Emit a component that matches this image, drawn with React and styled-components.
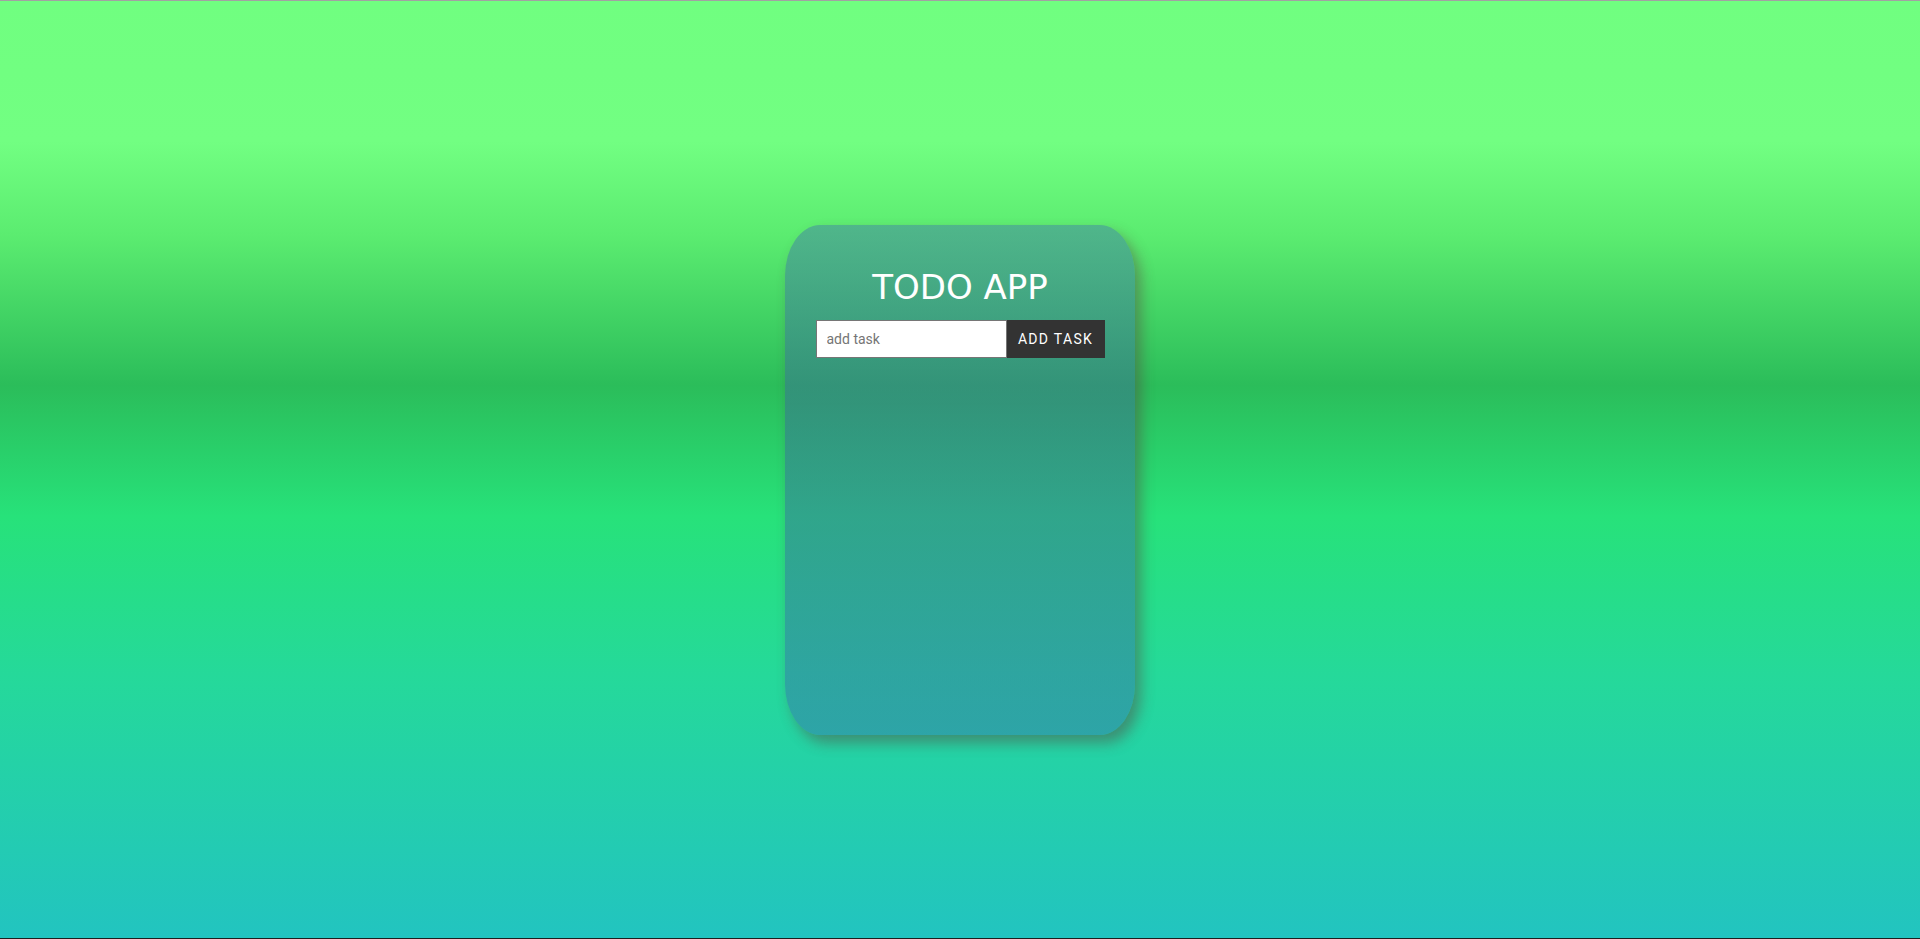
import React from "react";
import styled, { createGlobalStyle } from "styled-components";

const GlobalStyle = createGlobalStyle`
  html, body {
    margin: 0;
    padding: 0;
  }
  * {
    box-sizing: border-box;
  }
`;

const Page = styled.main`
  height: 100vh;
  border-top: 1px solid #a2a2a2;
  border-bottom: 1px solid #1e1e1e;
  background: linear-gradient(
    to bottom,
    #70ff80 0%,
    #72ff82 15%,
    #5bec70 25%,
    #2bbd5a 41%,
    #27e27a 55%,
    #25d99a 72%,
    #22c4c0 100%
  );
  display: flex;
  flex-direction: column;
  align-items: center;
  padding-top: 224px;
`;

const Card = styled.section`
  width: 350px;
  height: 510px;
  border-radius: 10%;
  background: linear-gradient(
    to bottom,
    rgba(68, 136, 159, 0.55) 0%,
    rgba(57, 111, 144, 0.55) 35%,
    rgba(53, 125, 171, 0.55) 100%
  );
  box-shadow: 6px 8px 14px rgba(90, 60, 60, 0.45);
  display: flex;
  flex-direction: column;
  align-items: center;
  padding-top: 42px;
`;

const Title = styled.h1`
  margin: 0 0 13px;
  font-family: "DejaVu Sans", "Liberation Sans", sans-serif;
  font-weight: normal;
  font-size: 34px;
  line-height: 40px;
  color: #fff;
`;

const TaskForm = styled.form`
  display: flex;
  height: 38px;
`;

const TaskInput = styled.input`
  width: 191px;
  height: 38px;
  border: 1px solid #767676;
  background: #fff;
  padding: 0 10px;
  font-family: Roboto, "Liberation Sans", sans-serif;
  font-size: 14px;
  color: #222;
  outline: none;

  &::placeholder {
    color: #757575;
  }
`;

const AddButton = styled.button`
  width: 98px;
  height: 38px;
  border: none;
  background: #333;
  color: #fff;
  font-family: Roboto, "Liberation Sans", sans-serif;
  font-size: 14px;
  letter-spacing: 1.3px;
  padding: 0;
  cursor: pointer;
`;

function App() {
  return (
    <>
      <GlobalStyle />
      <Page>
        <Card>
          <Title>TODO APP</Title>
          <TaskForm onSubmit={(e) => e.preventDefault()}>
            <TaskInput type="text" placeholder="add task" />
            <AddButton type="submit">ADD TASK</AddButton>
          </TaskForm>
        </Card>
      </Page>
    </>
  );
}

export default App;
